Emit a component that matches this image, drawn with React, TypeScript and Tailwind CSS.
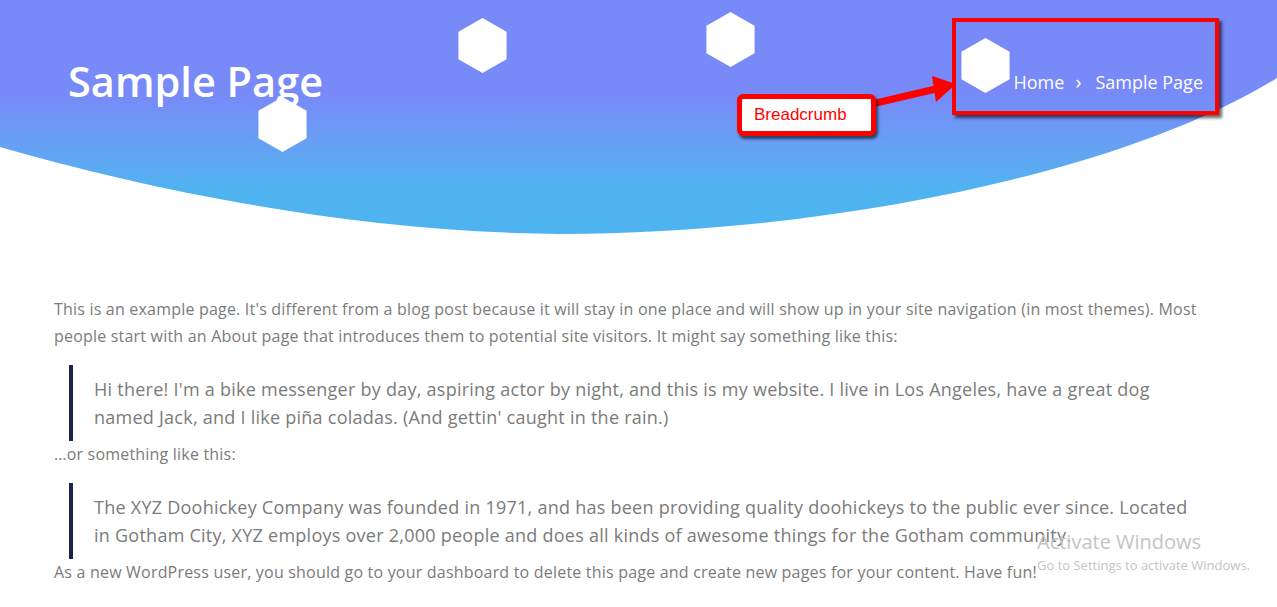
const Hexagon = ({ className }: { className: string }) => (
  <svg viewBox="0 0 49 56" className={`absolute ${className}`}>
    <polygon points="24.5,0 49,14 49,42 24.5,56 0,42 0,14" fill="#ffffff" />
  </svg>
);

const Quote = ({ children }: { children: React.ReactNode }) => (
  <blockquote className="ml-[15px] mr-[20px] mt-[15px] border-l-[4px] border-[#1b2150] py-[10px] pl-[21px] text-[18px] leading-[28px] tracking-[0.25px] text-[#7b7b7b]">
    {children}
  </blockquote>
);

export default function App() {
  return (
    <div className="relative min-h-[607px] bg-white font-['Open_Sans',sans-serif]">
      {/* header band */}
      <header className="relative h-[235px] overflow-hidden bg-linear-to-b from-[#7889f8] from-40% to-[#4fb3f0] to-80%">
        <svg className="absolute inset-0 h-full w-full" viewBox="0 0 1277 235" preserveAspectRatio="none">
          <path d="M0 147 C150 190 350 232 560 234 C820 234 1120 175 1277 78 L1277 235 L0 235 Z" fill="#ffffff" />
        </svg>

        <Hexagon className="left-[458px] top-[18px] h-[55px] w-[49px]" />
        <Hexagon className="left-[258px] top-[97px] h-[55px] w-[49px]" />
        <Hexagon className="left-[706px] top-[12px] h-[55px] w-[49px]" />
        <Hexagon className="left-[961px] top-[38px] h-[55px] w-[49px]" />

        <div className="relative flex h-[164px] items-center justify-between pl-[68px] pr-[74px]">
          <h1 className="text-[41.5px] font-semibold leading-none text-white">Sample Page</h1>
          <nav className="flex items-center text-[18px] font-medium text-white">
            <span>Home</span>
            <span className="ml-[11px] mr-[14px] text-[20px] leading-none">›</span>
            <span>Sample Page</span>
          </nav>
        </div>
      </header>

      {/* annotation overlay */}
      <div className="absolute left-[952px] top-[18px] h-[97px] w-[267px] border-[4px] border-[#ff0000] shadow-[3px_3px_3px_rgba(0,0,0,0.6)]" />
      <svg className="absolute left-[870px] top-[74px] h-[40px] w-[92px]" viewBox="0 0 92 40">
        <line x1="6" y1="29" x2="70" y2="14" stroke="#ff0000" strokeWidth="7" />
        <polygon points="62,2 86,10 66,28" fill="#ff0000" />
      </svg>
      <div className="absolute left-[737px] top-[94px] flex h-[42px] w-[139px] items-center rounded-[6px] border-[5px] border-[#ff0000] bg-white pl-[12px] font-['Liberation_Sans',sans-serif] text-[17px] text-[#ff0000] shadow-[2px_3px_3px_rgba(0,0,0,0.6)]">
        Breadcrumb
      </div>

      {/* page content */}
      <main className="px-[54px] pt-[61px] text-[16px] leading-[27px] tracking-[0.2px] text-[#7b7b7b]">
        <p className="max-w-[1169px]">
          This is an example page. It's different from a blog post because it will stay in one place and will show up in your site navigation (in most themes). Most people start with an About page that introduces them to potential site visitors. It might say something like this:
        </p>
        <Quote>
          Hi there! I'm a bike messenger by day, aspiring actor by night, and this is my website. I live in Los Angeles, have a great dog named Jack, and I like piña coladas. (And gettin' caught in the rain.)
        </Quote>
        <p>…or something like this:</p>
        <Quote>
          The XYZ Doohickey Company was founded in 1971, and has been providing quality doohickeys to the public ever since. Located in Gotham City, XYZ employs over 2,000 people and does all kinds of awesome things for the Gotham community.
        </Quote>
        <p>
          As a new WordPress user, you should go to your dashboard to delete this page and create new pages for your content. Have fun!
        </p>
      </main>

      {/* windows watermark */}
      <div className="absolute left-[1037px] top-[529px] text-[#c4c4c4]">
        <div className="text-[20px] leading-[26px]">Activate Windows</div>
        <div className="text-[13px] leading-[20px]">Go to Settings to activate Windows.</div>
      </div>
    </div>
  );
}
